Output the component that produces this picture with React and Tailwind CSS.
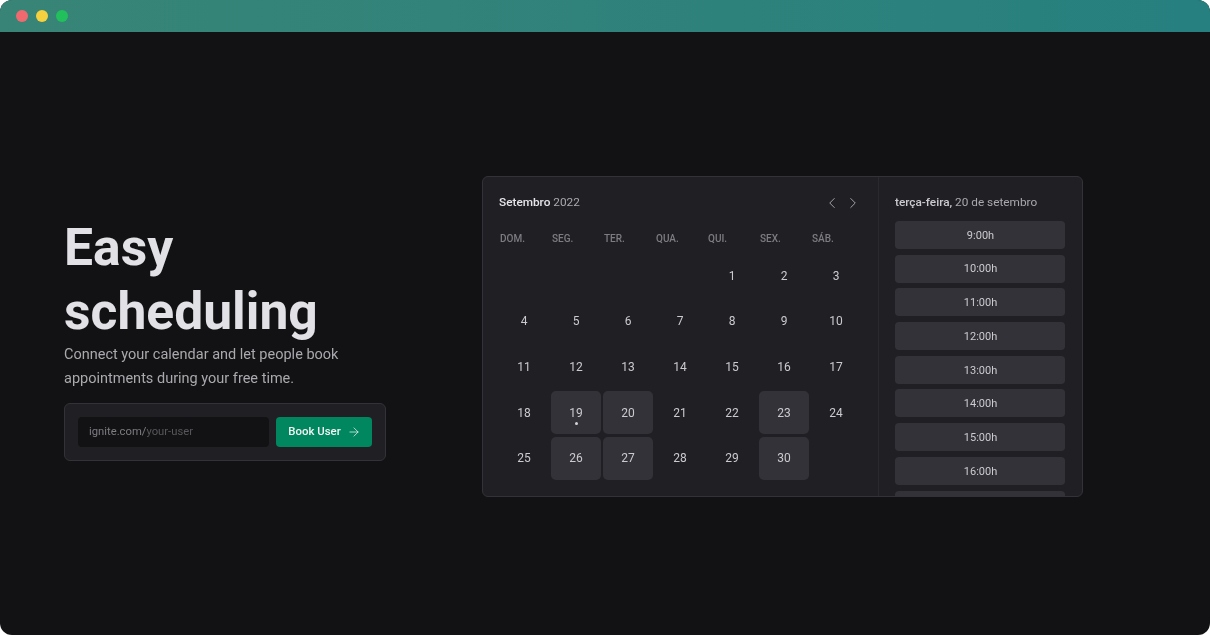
import React from "react";
import { ChevronLeft, ChevronRight, ArrowRight } from "lucide-react";

const weekDays = ["DOM.", "SEG.", "TER.", "QUA.", "QUI.", "SEX.", "SÁB."];
const available = [19, 20, 23, 26, 27, 30];
const times = ["9:00h", "10:00h", "11:00h", "12:00h", "13:00h", "14:00h", "15:00h", "16:00h", ""];
const blanks = [0, 1, 2, 3];
const days = Array.from({ length: 30 }, (_, i) => i + 1);

const App = () => {
  return (
    <div className="w-[1210px] h-[635px] bg-white overflow-hidden font-['Roboto',sans-serif] antialiased">
      <div className="w-full h-full rounded-[12px] bg-[#121214] overflow-hidden flex flex-col will-change-transform">
        {/* Browser bar */}
        <div className="h-8 shrink-0 bg-gradient-to-r from-[#388577] to-[#26807f] flex items-center gap-2 pl-4">
          <span className="w-3 h-3 rounded-full bg-[#f0696f]" />
          <span className="w-3 h-3 rounded-full bg-[#f5d13f]" />
          <span className="w-3 h-3 rounded-full bg-[#22c05c]" />
        </div>

        <div className="flex-1 flex items-center pl-16">
          {/* Hero */}
          <div className="w-[322px] shrink-0 mt-[10px]">
            <h1 className="text-[51.6px] leading-[64px] font-bold text-[#e1e1e6] w-[300px]">Easy scheduling</h1>
            <p className="text-[14.5px] leading-6 text-[#a9a9ae] -mt-px w-[300px]">
              Connect your calendar and let people book appointments during your free time.
            </p>
            <div className="mt-[12px] h-[58px] bg-[#202024] border border-[#323238] rounded-md flex items-center gap-[7px] pl-[13px]">
              <div className="w-[191px] h-[30px] bg-[#121214] rounded-[4px] flex items-center pl-[11px] text-[11.25px]">
                <span className="text-[#7c7c82]">ignite.com/</span>
                <span className="text-[#57575c]">your-user</span>
              </div>
              <button className="w-[96px] h-[30px] bg-[#00875f] rounded-[4px] flex items-center justify-center gap-[6px] pl-px text-[11.4px] font-medium text-[#f4f4f4]">
                Book User
                <ArrowRight size={14} strokeWidth={1.25} />
              </button>
            </div>
          </div>

          {/* Calendar */}
          <div className="ml-24 w-[601px] h-[321px] mt-[6px] bg-[#202024] border border-[#323238] rounded-md flex overflow-hidden">
            <div className="w-[395px] shrink-0 pl-[15px] pt-[16px]">
              <div className="flex items-center justify-between h-[20px] pl-[1px] pr-[16px]">
                <p className="text-[11.8px] font-medium text-[#e6e6ea]">
                  Setembro <span className="font-normal text-[#a9a9ae]">2022</span>
                </p>
                <div className="flex items-center gap-[3px] text-[#a9a9ae]">
                  <ChevronLeft size={18} strokeWidth={1.25} />
                  <ChevronRight size={18} strokeWidth={1.25} />
                </div>
              </div>

              <div className="grid grid-cols-[repeat(7,52px)] mt-[20px]">
                {weekDays.map((d) => (
                  <span key={d} className="pl-[2px] text-[10px] font-medium leading-[12px] text-[#7c7c82]">{d}</span>
                ))}
              </div>

              <div className="grid grid-cols-[repeat(7,52px)] auto-rows-[45.6px] mt-[8px]">
                {blanks.map((b) => (
                  <span key={b} />
                ))}
                {days.map((day) => {
                  const on = available.includes(day);
                  return (
                    <div key={day} className="flex items-center justify-center">
                      <div className={`relative w-[50px] h-[43px] rounded-[5px] flex items-center justify-center text-[12px] text-[#cbcbcf] ${on ? "bg-[#323238]" : ""}`}>
                        {day}
                        {day === 19 && <span className="absolute bottom-[9px] w-[3px] h-[3px] rounded-full bg-[#d4d4d8]" />}
                      </div>
                    </div>
                  );
                })}
              </div>
            </div>

            {/* Times */}
            <div className="flex-1 border-l border-[#29292e] pl-[16px] pr-[17px] pt-[16px]">
              <p className="h-[20px] flex items-center text-[11.8px] text-[#a9a9ae] whitespace-pre">
                <span className="font-medium text-[#cbcbcf]">terça-feira,</span> 20 de setembro
              </p>
              <div className="mt-[8px] flex flex-col gap-[5.7px]">
                {times.map((t, i) => (
                  <div key={i} className="h-[28px] shrink-0 pt-[2px] pl-px bg-[#323238] rounded-[4px] flex items-center justify-center text-[11px] text-[#cbcbcf]">
                    {t}
                  </div>
                ))}
              </div>
            </div>
          </div>
        </div>
      </div>
    </div>
  );
};

export default App;
